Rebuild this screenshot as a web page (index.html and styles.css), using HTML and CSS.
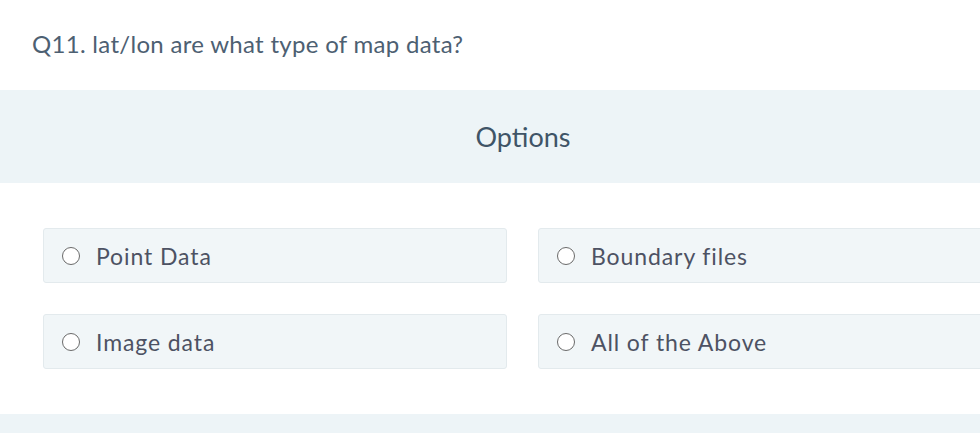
FILE: index.html
```html
<!DOCTYPE html>
<html>
<head>
<meta charset="utf-8">
<link rel="stylesheet" href="styles.css">
</head>
<body>
<div class="page">
  <h1 class="question">Q11. lat/lon are what type of map data?</h1>
  <div class="band"><h2 class="band-title">Options</h2></div>
  <div class="options">
    <label class="option"><span class="radio"></span><span class="opt-text">Point Data</span></label>
    <label class="option"><span class="radio"></span><span class="opt-text">Boundary files</span></label>
    <label class="option"><span class="radio"></span><span class="opt-text">Image data</span></label>
    <label class="option"><span class="radio"></span><span class="opt-text">All of the Above</span></label>
  </div>
  <div class="band band-bottom"></div>
</div>
</body>
</html>
```

FILE: styles.css
```css
html, body {
  margin: 0;
  padding: 0;
  background: #ffffff;
  overflow: hidden;
}
.page {
  width: 980px;
  height: 433px;
  overflow: hidden;
  font-family: Lato, "Noto Sans", sans-serif;
}
.question {
  margin: 0;
  padding: 28px 0 0 32px;
  height: 90px;
  box-sizing: border-box;
  font-size: 24px;
  font-weight: 400;
  line-height: 32px;
  letter-spacing: 0.3px;
  color: #4d6072;
}
.band {
  background: #edf4f7;
  height: 93px;
  display: flex;
  align-items: center;
  justify-content: center;
}
.band-title {
  margin: 0;
  font-size: 27px;
  font-weight: 400;
  color: #3f5467;
  padding-left: 66px;
}
.options {
  display: grid;
  grid-template-columns: 464px 464px;
  align-content: start;
  column-gap: 31px;
  row-gap: 31px;
  padding: 45px 0 0 43px;
  height: 231px;
  box-sizing: border-box;
}
.option {
  display: flex;
  align-items: center;
  height: 55px;
  box-sizing: border-box;
  background: #f1f6f8;
  border: 1px solid #e3eaed;
  border-radius: 3px;
  padding-left: 18px;
}
.radio {
  width: 18px;
  height: 18px;
  box-sizing: border-box;
  border: 1.5px solid #6a6a6a;
  border-radius: 50%;
  background: #ffffff;
  flex: none;
}
.opt-text {
  margin-left: 16px;
  font-size: 23px;
  letter-spacing: 0.9px;
  color: #4d5263;
}
.band-bottom {
  height: 30px;
}
```
